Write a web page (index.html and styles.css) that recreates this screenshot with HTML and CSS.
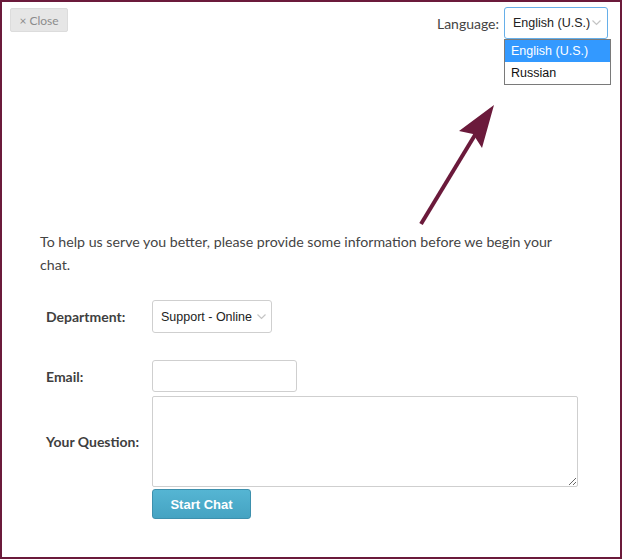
FILE: index.html
```html
<!DOCTYPE html>
<html lang="en">
<head>
<meta charset="utf-8">
<title>Chat</title>
<link rel="stylesheet" href="styles.css">
</head>
<body>
<div class="frame">
  <header class="topbar">
    <button class="close-btn" type="button">× Close</button>
    <div class="lang">
      <span class="lang-label">Language:</span>
      <div class="lang-wrap">
        <div class="select select-focus">
          <span class="select-text">English (U.S.)</span>
          <svg class="chev" width="9" height="6" viewBox="0 0 9 6"><path d="M0.5 0.5 L4.5 4.5 L8.5 0.5" fill="none" stroke="#c4c4c4" stroke-width="1.2"/></svg>
        </div>
        <ul class="dropdown">
          <li class="opt opt-active">English (U.S.)</li>
          <li class="opt">Russian</li>
        </ul>
      </div>
    </div>
  </header>

  <svg class="pointer" width="622" height="559" viewBox="0 0 622 559">
    <line x1="421" y1="224" x2="478" y2="130" stroke="#6b1a3b" stroke-width="4"/>
    <polygon points="494,105 459,131 473,134 482,148" fill="#6b1a3b"/>
  </svg>

  <main class="content">
    <p class="intro">To help us serve you better, please provide some information before we begin your chat.</p>
    <form class="form">
      <label class="label row-dept">Department:</label>
      <div class="control row-dept">
        <div class="select dept-select">
          <span class="select-text">Support - Online</span>
          <svg class="chev" width="9" height="6" viewBox="0 0 9 6"><path d="M0.5 0.5 L4.5 4.5 L8.5 0.5" fill="none" stroke="#c4c4c4" stroke-width="1.2"/></svg>
        </div>
      </div>
      <label class="label row-email">Email:</label>
      <div class="control row-email"><input class="input" type="text"></div>
      <label class="label row-q">Your Question:</label>
      <div class="control row-q"><textarea class="textarea"></textarea></div>
      <div class="control row-btn"><button class="start-btn" type="button">Start Chat</button></div>
    </form>
  </main>
</div>
</body>
</html>
```

FILE: styles.css
```css
* { box-sizing: border-box; }
html, body { margin: 0; padding: 0; background: #fff; }
.frame {
  position: relative;
  width: 622px;
  height: 559px;
  border: 2px solid #6b1a3b;
  font-family: "Lato", "Open Sans", sans-serif;
  color: #444;
}
.topbar {
  display: flex;
  justify-content: space-between;
  align-items: flex-start;
  padding: 6px 12px 0 8px;
}
.close-btn {
  width: 58px;
  height: 24px;
  background: #e6e6e6;
  border: 1px solid #dcdcdc;
  border-radius: 2px;
  color: #8c8c8c;
  font-family: "Lato", sans-serif;
  font-size: 12px;
  padding: 0;
}
.lang { display: flex; align-items: center; gap: 5px; margin-top: -1px; }
.lang-label { font-size: 14px; color: #444; }
.lang-wrap { position: relative; }
.select {
  display: flex;
  align-items: center;
  justify-content: space-between;
  background: #fff;
  border: 1px solid #cfcfcf;
  border-radius: 3px;
  font-family: "Liberation Sans", Arial, sans-serif;
  font-size: 12.5px;
  color: #222;
}
.select-focus {
  width: 104px;
  height: 32px;
  padding: 0 6px 0 8px;
  border-color: #66afe9;
}
.chev { flex: none; }
.dropdown {
  position: absolute;
  left: 0;
  top: 32px;
  width: 107px;
  margin: 0;
  padding: 0;
  list-style: none;
  background: #fff;
  border: 1px solid #7a7a7a;
  font-family: "Liberation Sans", Arial, sans-serif;
  font-size: 12.5px;
  color: #111;
}
.opt { height: 22px; line-height: 22px; padding-left: 6px; }
.opt-active { background: #3399ff; color: #fff; }

.pointer { position: absolute; left: -2px; top: -2px; pointer-events: none; }

.content { padding: 191px 40px 0 38px; }
.intro {
  margin: 0;
  font-size: 14.2px;
  line-height: 23px;
  width: 535px;
  color: #444;
}
.form {
  display: grid;
  grid-template-columns: 106px 1fr;
  align-items: center;
  margin-top: 24px;
  padding-left: 6px;
}
.label { font-weight: bold; font-size: 14px; color: #3f3f3f; grid-column: 1; }
.control { grid-column: 2; display: flex; }
.row-email { margin-top: 27px; }
.row-q { margin-top: 4px; }
.row-btn { margin-top: 2px; }
.dept-select { width: 120px; height: 33px; padding: 0 5px 0 8px; border-radius: 3px; }
.input {
  width: 145px;
  height: 32px;
  border: 1px solid #cfcfcf;
  border-radius: 3px;
}
.textarea {
  width: 426px;
  height: 91px;
  border: 1px solid #cfcfcf;
  border-radius: 2px;
  resize: both;
}
.start-btn {
  width: 99px;
  height: 30px;
  background: linear-gradient(#55b5d3, #45a3c2);
  border: 1px solid #3d90ad;
  border-radius: 3px;
  color: #fff;
  font-family: "Liberation Sans", Arial, sans-serif;
  font-weight: bold;
  font-size: 13px;
  padding: 0;
}
```
